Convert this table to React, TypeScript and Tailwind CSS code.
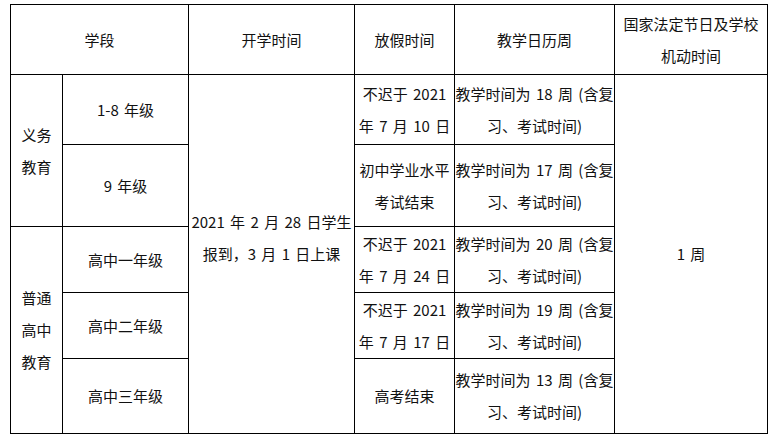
import React from "react";

type CellProps = {
  className?: string;
  children?: React.ReactNode;
};

const Cell: React.FC<CellProps> = ({ className = "", children }) => (
  <div
    className={`flex items-center justify-center border-r border-b border-black text-center leading-[32px] whitespace-nowrap ${className}`}
  >
    <div>{children}</div>
  </div>
);

const Lines: React.FC<{ lines: string[] }> = ({ lines }) => (
  <>
    {lines.map((l, i) => (
      <div key={i}>{l}</div>
    ))}
  </>
);

const weekText = (n: number) => ["教学时间为 " + n + " 周 (含复", "习、考试时间)"];

const App: React.FC = () => {
  return (
    <div className="w-[778px] h-[443px] bg-white pt-[4px] pl-[10px] text-[15px] text-[#111] [word-spacing:2px] font-['Noto_Sans_CJK_SC','Noto_Sans',sans-serif]">
      <div className="grid w-[758px] grid-cols-[52px_126px_166px_100px_160px_153px] grid-rows-[70px_70px_82px_66px_66px_75px] border-t border-l border-black">
        {/* header */}
        <Cell className="col-start-1 col-span-2 row-start-1">学段</Cell>
        <Cell className="col-start-3 row-start-1">开学时间</Cell>
        <Cell className="col-start-4 row-start-1">放假时间</Cell>
        <Cell className="col-start-5 row-start-1">教学日历周</Cell>
        <Cell className="col-start-6 row-start-1">
          <Lines lines={["国家法定节日及学校", "机动时间"]} />
        </Cell>

        {/* stage */}
        <Cell className="col-start-1 row-start-2 row-span-2">
          <Lines lines={["义务", "教育"]} />
        </Cell>
        <Cell className="col-start-1 row-start-4 row-span-3">
          <Lines lines={["普通", "高中", "教育"]} />
        </Cell>

        {/* grades */}
        <Cell className="col-start-2 row-start-2">1-8 年级</Cell>
        <Cell className="col-start-2 row-start-3">9 年级</Cell>
        <Cell className="col-start-2 row-start-4">高中一年级</Cell>
        <Cell className="col-start-2 row-start-5">高中二年级</Cell>
        <Cell className="col-start-2 row-start-6">高中三年级</Cell>

        {/* start date */}
        <Cell className="col-start-3 row-start-2 row-span-5">
          <div className="pb-[32px]">
            <Lines lines={["2021 年 2 月 28 日学生", "报到，3 月 1 日上课"]} />
          </div>
        </Cell>

        {/* holidays */}
        <Cell className="col-start-4 row-start-2">
          <Lines lines={["不迟于 2021", "年 7 月 10 日"]} />
        </Cell>
        <Cell className="col-start-4 row-start-3">
          <Lines lines={["初中学业水平", "考试结束"]} />
        </Cell>
        <Cell className="col-start-4 row-start-4">
          <Lines lines={["不迟于 2021", "年 7 月 24 日"]} />
        </Cell>
        <Cell className="col-start-4 row-start-5">
          <Lines lines={["不迟于 2021", "年 7 月 17 日"]} />
        </Cell>
        <Cell className="col-start-4 row-start-6">高考结束</Cell>

        {/* weeks */}
        <Cell className="col-start-5 row-start-2">
          <Lines lines={weekText(18)} />
        </Cell>
        <Cell className="col-start-5 row-start-3">
          <Lines lines={weekText(17)} />
        </Cell>
        <Cell className="col-start-5 row-start-4">
          <Lines lines={weekText(20)} />
        </Cell>
        <Cell className="col-start-5 row-start-5">
          <Lines lines={weekText(19)} />
        </Cell>
        <Cell className="col-start-5 row-start-6">
          <Lines lines={weekText(13)} />
        </Cell>

        <Cell className="col-start-6 row-start-2 row-span-5">1 周</Cell>
      </div>
    </div>
  );
};

export default App;
